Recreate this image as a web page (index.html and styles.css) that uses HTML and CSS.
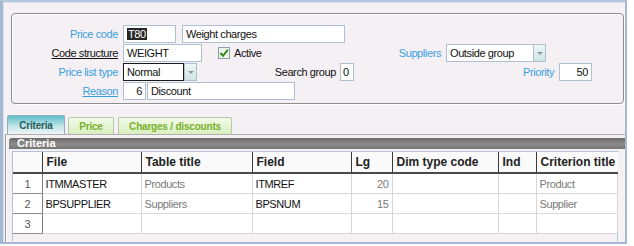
FILE: index.html
```html
<!DOCTYPE html>
<html lang="en">
<head>
    <meta charset="UTF-8">
    <title>Price list structure</title>
    <link rel="stylesheet" href="styles.css">
</head>
<body>
    <div class="window">
        <div class="group">
            <div class="row">
                <span class="lbl blue">Price code</span>
                <span class="field w-code"><span class="selected">T80</span></span>
                <span class="field w-desc">Weight charges</span>
            </div>
            <div class="row">
                <span class="lbl link-black">Code structure</span>
                <span class="field w-struct">WEIGHT</span>
                <span class="check-wrap">
                    <svg class="check" width="12" height="12" viewBox="0 0 12 12">
                        <rect x="0.5" y="0.5" width="11" height="11" fill="#eef4ea" stroke="#8c9fae"/>
                        <path d="M2.5 6 L5 8.8 L9.8 2.8" fill="none" stroke="#2f8a1c" stroke-width="2"/>
                    </svg>
                    Active
                </span>
                <span class="lbl-free w-sup blue">Suppliers</span>
                <span class="combo">
                    <span class="field combo-box w-supbox">Outside group</span>
                    <span class="combo-btn"></span>
                </span>
            </div>
            <div class="row">
                <span class="lbl blue">Price list type</span>
                <span class="combo">
                    <span class="field combo-box focus w-type">Normal</span>
                    <span class="combo-btn"></span>
                </span>
                <span class="lbl-free w-search">Search group</span>
                <span class="field w-zero">0</span>
                <span class="lbl-free w-prio blue">Priority</span>
                <span class="field w-prioval num">50</span>
            </div>
            <div class="row">
                <span class="lbl link-blue">Reason</span>
                <span class="field w-reason num">6</span>
                <span class="field w-discount">Discount</span>
            </div>
        </div>

        <div class="tabs">
            <span class="tab active w-tab1">Criteria</span>
            <span class="tab w-tab2">Price</span>
            <span class="tab w-tab3">Charges / discounts</span>
        </div>

        <div class="panel">
            <div class="panel-title">Criteria</div>
            <div class="grid-wrap">
                <table class="grid">
                    <colgroup>
                        <col style="width:29px">
                        <col style="width:99px">
                        <col style="width:111px">
                        <col style="width:99px">
                        <col style="width:41px">
                        <col style="width:106px">
                        <col style="width:38px">
                        <col style="width:81px">
                    </colgroup>
                    <thead>
                        <tr>
                            <th></th>
                            <th>File</th>
                            <th>Table title</th>
                            <th>Field</th>
                            <th>Lg</th>
                            <th>Dim type code</th>
                            <th>Ind</th>
                            <th>Criterion title</th>
                        </tr>
                    </thead>
                    <tbody>
                        <tr>
                            <td class="rownum">1</td>
                            <td>ITMMASTER</td>
                            <td class="muted">Products</td>
                            <td>ITMREF</td>
                            <td class="muted num">20</td>
                            <td></td>
                            <td></td>
                            <td class="muted">Product</td>
                        </tr>
                        <tr>
                            <td class="rownum">2</td>
                            <td>BPSUPPLIER</td>
                            <td class="muted">Suppliers</td>
                            <td>BPSNUM</td>
                            <td class="muted num">15</td>
                            <td></td>
                            <td></td>
                            <td class="muted">Supplier</td>
                        </tr>
                        <tr>
                            <td class="rownum">3</td>
                            <td></td>
                            <td></td>
                            <td></td>
                            <td></td>
                            <td></td>
                            <td></td>
                            <td></td>
                        </tr>
                    </tbody>
                </table>
            </div>
        </div>
    </div>
</body>
</html>
```

FILE: styles.css
```css
body {
    margin: 0;
    background: #fff;
    font-family: "Liberation Sans", Arial, sans-serif;
    font-size: 11px;
    letter-spacing: -0.4px;
    color: #111;
}
.window {
    width: 622px;
    height: 239px;
    background: #f4f0f4;
    border-top: 2px solid #b4c6dc;
    border-left: 3px solid #a4b8d2;
    border-right: 2px solid #a4b8d2;
    border-bottom: 2px solid #a4b8d2;
    box-shadow: inset 1px 1px 0 #d8e2ee;
    padding-top: 1px;
}
.group {
    margin: 10px 0 0 8px;
    width: 611px;
    height: 89px;
    border: 1px solid #8e8e8e;
    border-radius: 4px;
    box-shadow: inset 1px 1px 0 #fff, 1px 1px 0 #fff;
    padding-top: 10px;
    box-sizing: content-box;
}
.group {
    height: 79px;
}
.row {
    display: flex;
    align-items: center;
    height: 19px;
}
.lbl {
    width: 106px;
    margin-right: 5px;
    text-align: right;
    white-space: nowrap;
}
.lbl-free {
    text-align: right;
    white-space: nowrap;
    margin-right: 5px;
}
.blue {
    color: #3a9fe0;
}
.link-black {
    color: #111;
    text-decoration: underline;
}
.link-blue {
    color: #3a9fe0;
    text-decoration: underline;
}
.field {
    height: 18px;
    line-height: 16px;
    box-sizing: border-box;
    border: 1px solid #aebfd0;
    background: #fff;
    padding: 0 3px;
    white-space: nowrap;
    overflow: hidden;
}
.num {
    text-align: right;
}
.selected {
    background: #262626;
    color: #fff;
    padding: 0 1px;
}
.w-code { width: 53px; }
.w-desc { width: 163px; margin-left: 6px; }
.w-struct { width: 79px; }
.check-wrap {
    display: flex;
    align-items: center;
    gap: 4px;
    width: 72px;
    margin-left: 16px;
}
.w-sup { width: 151px; }
.combo {
    display: flex;
}
.combo-box {
    border-right: none;
}
.w-supbox { width: 87px; }
.w-type { width: 61px; }
.combo-box.focus {
    border: 1px solid #1a1a1a;
}
.combo-btn {
    width: 13px;
    height: 18px;
    box-sizing: border-box;
    border: 1px solid #aebfd0;
    background: linear-gradient(#eef7f7, #cfe4e4);
    position: relative;
}
.combo-btn::after {
    content: "";
    position: absolute;
    left: 3px;
    top: 7px;
    border-left: 3px solid transparent;
    border-right: 3px solid transparent;
    border-top: 3px solid #8a9aa4;
}
.w-search { width: 139px; margin-right: 4px; }
.w-zero { width: 14px; padding: 0 2px; }
.w-prio { width: 200px; }
.w-prioval { width: 33px; }
.w-reason { width: 23px; }
.w-discount { width: 148px; margin-left: 1px; }

.tabs {
    display: flex;
    align-items: flex-end;
    margin: 11px 0 0 4px;
    height: 19px;
}
.tab {
    height: 17px;
    line-height: 17px;
    box-sizing: border-box;
    text-align: center;
    font-size: 10px;
    font-weight: bold;
    letter-spacing: -0.2px;
    color: #7aaf2c;
    background: linear-gradient(#f2fae8, #d8efc0);
    border: 1px solid #b8c8b0;
    border-bottom: none;
    border-radius: 2px 2px 0 0;
    margin-right: 3px;
}
.tab.active {
    height: 19px;
    line-height: 20px;
    color: #275c5e;
    background: linear-gradient(#5fbfcc, #bfe4e6 55%, #eef6f6);
    border-color: #8fb0b8;
}
.w-tab1 { width: 58px; }
.w-tab2 { width: 46px; }
.w-tab3 { width: 114px; margin-left: 1px; }

.panel {
    margin-left: 2px;
    height: 104px;
    border-top: 1px solid #b0b0b0;
    border-left: 1px solid #9a9a9a;
    box-shadow: inset 1px 0 0 #fff;
    padding: 3px 0 0 3px;
}
.panel-title {
    height: 11px;
    line-height: 11px;
    color: #fff;
    font-weight: bold;
    letter-spacing: 0;
    padding-left: 8px;
    background: linear-gradient(#6a6a6a, #8c8c8c 55%, #757575);
    border-radius: 3px 0 0 0;
}
.grid-wrap {
    margin: 2px 7px 0 3px;
    height: 89px;
    border: 1px solid #b2c4d6;
    border-bottom: none;
    background: #f4f0f4;
}
.grid {
    border-collapse: collapse;
    table-layout: fixed;
    width: 604px;
    background: #fff;
}
.grid th {
    height: 21px;
    padding: 0 0 0 4px;
    box-sizing: border-box;
    text-align: left;
    font-size: 12px;
    font-weight: bold;
    letter-spacing: 0;
    color: #222;
    background: #fafafa;
    border-left: 1px solid #3a3a3a;
    border-bottom: 2px solid #4a4a4a;
}
.grid th:first-child {
    border-left: none;
}
.grid td {
    height: 19px;
    padding: 0 3px;
    border-right: 1px solid #d8d8d8;
    border-bottom: 1px solid #d8d8d8;
    white-space: nowrap;
    overflow: hidden;
}
.grid td.rownum {
    text-align: center;
    color: #555;
    border-right: 1px solid #7c7c7c;
    border-bottom: 1px solid #8c8c8c;
}
.grid td.muted {
    color: #7a7a7a;
}
```
